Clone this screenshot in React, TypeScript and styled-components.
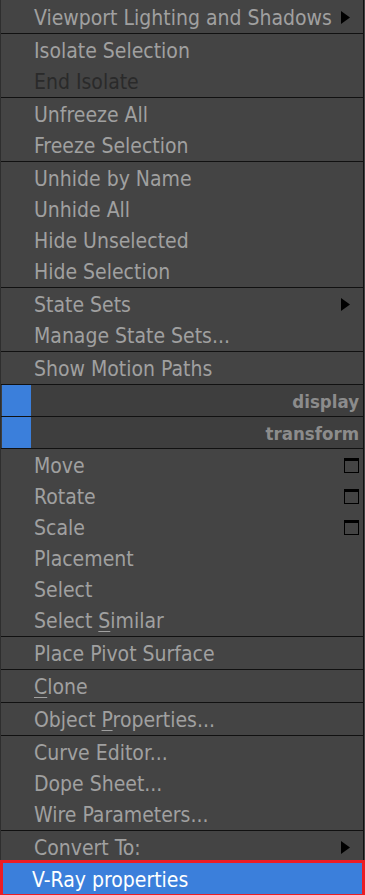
import React from 'react'
import styled, { createGlobalStyle } from 'styled-components'

type Item = {
  label: React.ReactNode
  disabled?: boolean
  submenu?: boolean
  box?: boolean
}

type Section =
  | { kind: 'group'; items: Item[] }
  | { kind: 'header'; title: string }

function buildSections(): Section[] {
  return [
    { kind: 'group', items: [{ label: 'Viewport Lighting and Shadows', submenu: true }] },
    { kind: 'group', items: [{ label: 'Isolate Selection' }, { label: 'End Isolate', disabled: true }] },
    { kind: 'group', items: [{ label: 'Unfreeze All' }, { label: 'Freeze Selection' }] },
    {
      kind: 'group',
      items: [{ label: 'Unhide by Name' }, { label: 'Unhide All' }, { label: 'Hide Unselected' }, { label: 'Hide Selection' }],
    },
    { kind: 'group', items: [{ label: 'State Sets', submenu: true }, { label: 'Manage State Sets...' }] },
    { kind: 'group', items: [{ label: 'Show Motion Paths' }] },
    { kind: 'header', title: 'display' },
    { kind: 'header', title: 'transform' },
    {
      kind: 'group',
      items: [
        { label: 'Move', box: true },
        { label: 'Rotate', box: true },
        { label: 'Scale', box: true },
        { label: 'Placement' },
        { label: 'Select' },
        {
          label: (
            <>
              Select <Key>S</Key>imilar
            </>
          ),
        },
      ],
    },
    { kind: 'group', items: [{ label: 'Place Pivot Surface' }] },
    {
      kind: 'group',
      items: [
        {
          label: (
            <>
              <Key>C</Key>lone
            </>
          ),
        },
      ],
    },
    {
      kind: 'group',
      items: [
        {
          label: (
            <>
              Object <Key>P</Key>roperties...
            </>
          ),
        },
      ],
    },
    { kind: 'group', items: [{ label: 'Curve Editor...' }, { label: 'Dope Sheet...' }, { label: 'Wire Parameters...' }] },
  ]
}

function App() {
  const sections = buildSections()
  return (
    <>
      <GlobalStyle />
      <Menu>
        {sections.map((s, i) =>
          s.kind === 'header' ? (
            <Header key={i}>
              <HeaderSwatch />
              <HeaderTitle>{s.title}</HeaderTitle>
            </Header>
          ) : (
            <Group key={i} $first={i === 0}>
              {s.items.map((item, j) => (
                <MenuRow key={j} item={item} />
              ))}
            </Group>
          )
        )}
        <Group>
          <MenuRow item={{ label: 'Convert To:', submenu: true }} />
          <Highlighted>
            <Label $active>V-Ray properties</Label>
          </Highlighted>
        </Group>
      </Menu>
    </>
  )
}

function MenuRow({ item }: { item: Item }) {
  return (
    <Row>
      <Label $disabled={item.disabled}>{item.label}</Label>
      {item.submenu && (
        <Arrow width="9" height="13" viewBox="0 0 9 13">
          <path d="M0 0 L9 6.5 L0 13 Z" fill="#000" />
        </Arrow>
      )}
      {item.box && (
        <BoxIcon width="15" height="15" viewBox="0 0 15 15">
          <rect x="0.5" y="0.5" width="14" height="14" fill="none" stroke="#000" />
          <rect x="0" y="0" width="15" height="3" fill="#000" />
        </BoxIcon>
      )}
    </Row>
  )
}

export default App

const GlobalStyle = createGlobalStyle`
  html, body {
    margin: 0;
    padding: 0;
    background: #444444;
    overflow: hidden;
  }
  body {
    font-family: "DejaVu Sans Condensed", "DejaVu Sans", sans-serif;
    font-stretch: condensed;
  }
`

const Menu = styled.div`
  width: 364px;
  height: 895px;
  box-sizing: border-box;
  background: #444444;
  border-left: 1px solid #2e2e2e;
  border-right: 1px solid #111111;
  display: flex;
  flex-direction: column;
`

const Group = styled.div<{ $first?: boolean }>`
  display: flex;
  flex-direction: column;
  padding-top: ${(p) => (p.$first ? '1px' : '0')};
  padding-bottom: 1px;
  border-bottom: 1px solid #111111;
  &:last-child {
    flex: 1;
    border-bottom: none;
    padding-bottom: 0;
  }
`

const Row = styled.div`
  height: 31px;
  display: flex;
  align-items: center;
  padding-left: 33px;
  padding-right: 13px;
`

const Label = styled.span<{ $disabled?: boolean; $active?: boolean }>`
  flex: 1;
  font-size: 21px;
  line-height: 27px;
  padding-top: 4px;
  white-space: nowrap;
  color: ${(p) => (p.$active ? '#ffffff' : p.$disabled ? '#2a2a2a' : '#a0a0a0')};
`

const Key = styled.span`
  text-decoration: underline;
  text-decoration-thickness: 1px;
  text-underline-offset: 3px;
`

const Arrow = styled.svg`
  flex: none;
  margin-top: 2px;
`

const BoxIcon = styled.svg`
  flex: none;
  margin-right: -9px;
  margin-top: 1px;
`

const Header = styled.div`
  height: 31px;
  display: flex;
  align-items: stretch;
  background: #3e3e3e;
  border-bottom: 1px solid #111111;
  padding-left: 1px;
`

const HeaderSwatch = styled.div`
  width: 29px;
  background: #3b7fdb;
`

const HeaderTitle = styled.div`
  flex: 1;
  text-align: right;
  padding-right: 4px;
  padding-top: 3px;
  font-size: 18.5px;
  font-weight: bold;
  line-height: 28px;
  color: #8c8c8c;
`

const Highlighted = styled.div`
  flex: 1;
  display: flex;
  align-items: center;
  margin: -2px -2px 0 -1px;
  padding-left: 29px;
  background: #3b7fdb;
  border: 3px solid #ec1c24;
`
